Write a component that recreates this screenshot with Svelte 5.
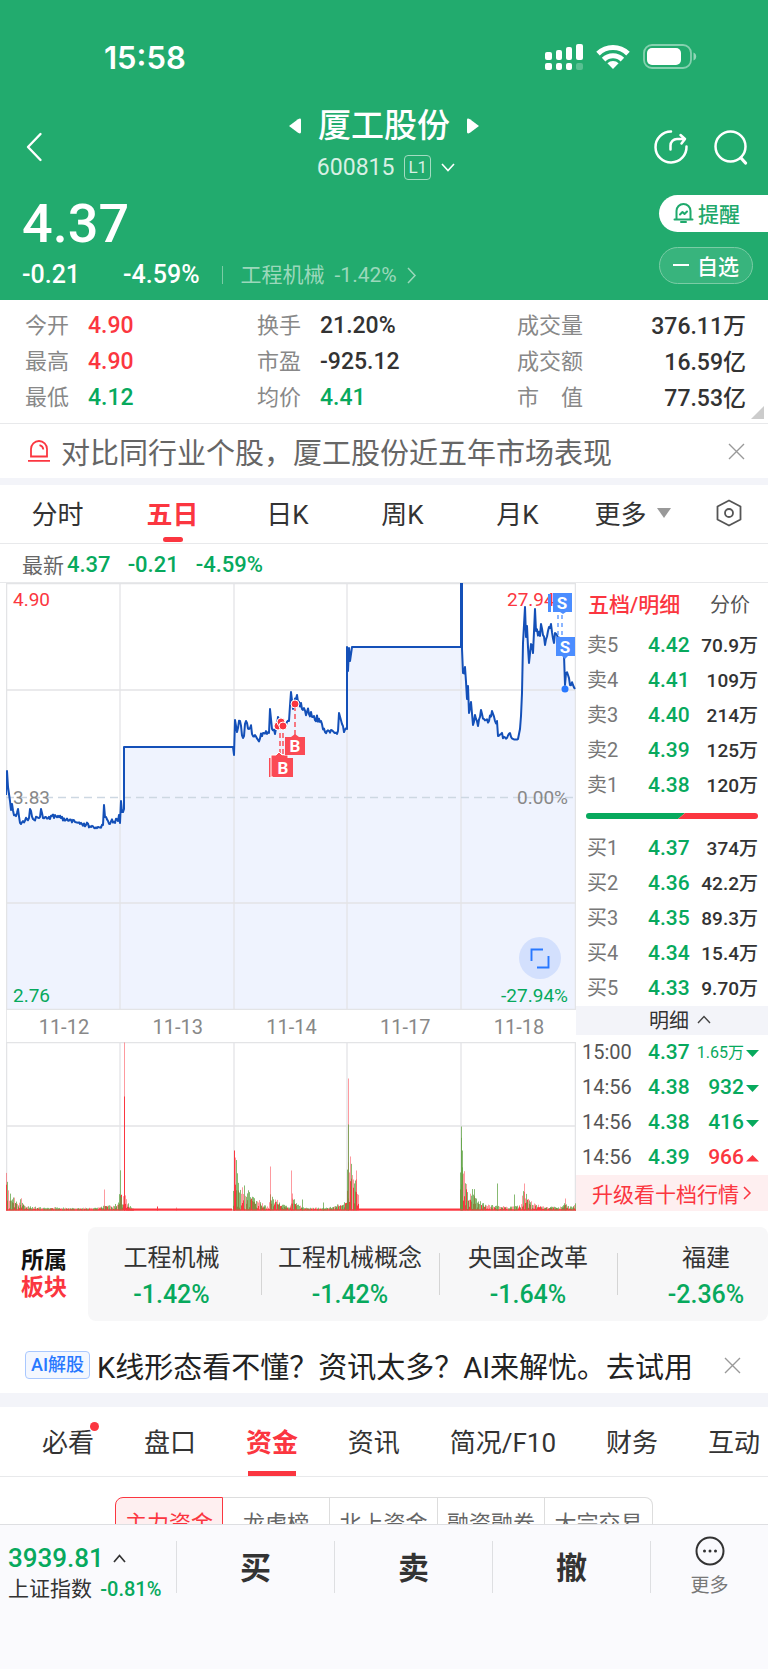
<script>
	const stats = [
		[
			{ label: '今开', value: '4.90', tone: 'up' },
			{ label: '最高', value: '4.90', tone: 'up' },
			{ label: '最低', value: '4.12', tone: 'down' }
		],
		[
			{ label: '换手', value: '21.20%' },
			{ label: '市盈', value: '-925.12' },
			{ label: '均价', value: '4.41', tone: 'down' }
		],
		[
			{ label: '成交量', value: '376.11万' },
			{ label: '成交额', value: '16.59亿' },
			{ label: '市　值', value: '77.53亿' }
		]
	];

	const periods = ['分时', '五日', '日K', '周K', '月K'];
	let period = $state('五日');

	const sells = [
		['卖5', '4.42', '70.9万'],
		['卖4', '4.41', '109万'],
		['卖3', '4.40', '214万'],
		['卖2', '4.39', '125万'],
		['卖1', '4.38', '120万']
	];
	const buys = [
		['买1', '4.37', '374万'],
		['买2', '4.36', '42.2万'],
		['买3', '4.35', '89.3万'],
		['买4', '4.34', '15.4万'],
		['买5', '4.33', '9.70万']
	];
	const trades = [
		{ time: '15:00', price: '4.37', qty: '1.65万', dir: 'down' },
		{ time: '14:56', price: '4.38', qty: '932', dir: 'down' },
		{ time: '14:56', price: '4.38', qty: '416', dir: 'down' },
		{ time: '14:56', price: '4.39', qty: '966', dir: 'up' }
	];

	const sectors = [
		{ name: '工程机械', pct: '-1.42%' },
		{ name: '工程机械概念', pct: '-1.42%' },
		{ name: '央国企改革', pct: '-1.64%' },
		{ name: '福建', pct: '-2.36%' }
	];

	const sections = ['必看', '盘口', '资金', '资讯', '简况/F10', '财务', '互动'];
	let section = $state('资金');

	const funds = ['主力资金', '龙虎榜', '北上资金', '融资融券', '大宗交易'];
	let fund = $state('主力资金');

	const dates = ['11-12', '11-13', '11-14', '11-17', '11-18'];
	const gridX = [114, 228, 341, 455];

	// repeatable noise in 0..1
	function noise(n) {
		const s = Math.sin(n * 127.1 + 11.7) * 43758.5453;
		return s - Math.floor(s);
	}

	// [x, y, jitter up to the next point]
	const price = [
		[0, 212, 0], [1, 188, 0], [2, 204, 0], [4, 218, 2], [5, 227, 2], [6, 221, 4], [9, 232, 4], [12, 226, 4], [15, 241, 3],
		[23, 235, 1], [24, 226, 2], [27, 236, 2], [34, 234, 1], [35, 226, 2], [37, 235, 3], [44, 236, 3], [49, 232, 2],
		[60, 237, 2], [80, 242, 3], [92, 244, 2], [97, 242, 0], [98, 222, 0], [99, 234, 2], [102, 238, 3], [109, 240, 4],
		[113, 232, 2], [114, 240, 0], [115, 218, 0], [116, 229, 2], [118, 226, 0], [118, 164, 0], [227, 164, 0], [228, 172, 0],
		[229, 137, 0], [231, 149, 6], [234, 138, 4], [237, 155, 4], [240, 138, 4], [243, 146, 6], [249, 152, 5], [252, 157, 3],
		[257, 150, 2], [263, 150, 0], [264, 126, 0], [266, 146, 3], [269, 151, 3], [272, 134, 3], [276, 143, 3], [283, 138, 2],
		[285, 109, 0], [287, 126, 4], [291, 112, 5], [296, 126, 5], [303, 131, 3], [308, 133, 4], [315, 138, 3], [319, 149, 3],
		[325, 147, 3], [331, 151, 2], [332, 148, 0], [333, 130, 0], [336, 141, 3], [338, 149, 2], [341, 146, 0], [341, 64, 0],
		[342, 88, 0], [343, 65, 0], [344, 78, 0], [346, 64, 0], [455, 64, 0], [455, 0, 0], [456, 0, 0], [456, 66, 0],
		[457, 90, 5], [459, 84, 4], [461, 116, 3], [462, 103, 0], [463, 130, 3], [465, 119, 0], [467, 142, 2], [469, 132, 3],
		[472, 143, 2], [475, 127, 3], [478, 136, 3], [483, 138, 4], [486, 128, 3], [489, 138, 3], [491, 138, 0], [492, 153, 2],
		[495, 151, 3], [501, 155, 1], [504, 150, 2], [507, 156, 1], [512, 156, 0], [514, 146, 3], [515, 133, 2], [516, 110, 2],
		[517, 60, 0], [519, 24, 0], [520, 54, 3], [521, 43, 3], [523, 80, 0], [525, 61, 5], [527, 70, 2], [529, 26, 0],
		[530, 48, 4], [534, 53, 0], [535, 41, 4], [539, 62, 4], [542, 48, 3], [545, 41, 3], [548, 60, 0], [549, 50, 3],
		[556, 62, 4], [558, 72, 0], [559, 102, 0], [560, 90, 3], [562, 92, 3], [564, 102, 3], [567, 102, 2], [569, 106, 0]
	];

	function pricePath() {
		const out = [];
		for (let i = 0; i < price.length; i++) {
			const [x, y, j] = price[i];
			out.push(`${x},${y}`);
			const next = price[i + 1];
			if (!next || j === 0) continue;
			for (let px = x + 1; px < next[0]; px++) {
				const t = (px - x) / (next[0] - x);
				out.push(`${px},${(y + (next[1] - y) * t + (noise(px) - 0.5) * 2 * j).toFixed(1)}`);
			}
		}
		return out.join(' ');
	}
	const line = pricePath();

	// volume envelope: [x, height]
	const volume = [
		[0, 44], [1, 34], [3, 18], [8, 13], [12, 6], [15, 14], [18, 6], [25, 4], [60, 3], [90, 3], [96, 4], [98, 8], [104, 5],
		[112, 8], [114, 42], [116, 10], [118, 20], [121, 10], [126, 3], [128, 2], [226, 2], [228, 66], [231, 44], [234, 24],
		[240, 26], [247, 15], [255, 9], [262, 4], [264, 20], [268, 14], [276, 7], [283, 4], [286, 16], [292, 6], [300, 3],
		[318, 3], [325, 4], [335, 8], [340, 12], [342, 88], [344, 60], [346, 36], [350, 40], [352, 18], [353, 2], [453, 2],
		[455, 84], [457, 44], [460, 40], [462, 18], [467, 26], [471, 12], [478, 7], [490, 5], [505, 4], [514, 6], [518, 26],
		[522, 12], [530, 7], [542, 4], [555, 4], [559, 10], [563, 4], [570, 8]
	];
	const spikes = [
		[98, 21, 'p'], [118, 168, 'p'], [118, 114, 'r'], [151, 4, 'r'], [170, 3, 'p'], [228, 60, 'r'], [264, 44, 'p'],
		[285, 40, 'p'], [286, 17, 'p'], [296, 11, 'g'], [317, 8, 'g'], [342, 132, 'p'], [342, 86, 'g'], [347, 31, 'p'],
		[350, 40, 'p'], [455, 84, 'g'], [456, 60, 'g'], [491, 27, 'g'], [508, 16, 'g'], [518, 27, 'p'], [559, 12, 'p']
	];

	function volumeBars() {
		const bars = [];
		for (let i = 0; i < volume.length - 1; i++) {
			const [x0, h0] = volume[i];
			const [x1, h1] = volume[i + 1];
			for (let x = x0; x < x1; x++) {
				const h = h0 + ((h1 - h0) * (x - x0)) / (x1 - x0);
				if (h <= 2) continue;
				bars.push([x, Math.max(1, h * 0.7 * noise(x + 300)), 'r']);
				bars.push([x, Math.max(2, h * (0.5 + noise(x) * 0.5)), noise(x + 900) > 0.4 ? 'g' : 'p']);
			}
		}
		return bars.concat(spikes);
	}
	const bars = volumeBars();
</script>

<svelte:head>
	<title>厦工股份 600815</title>
</svelte:head>

{#snippet closeIcon()}
	<svg width="17" height="17" viewBox="0 0 17 17" fill="none" stroke="#999" stroke-width="1.4"><path d="M1 1l15 15M16 1L1 16" /></svg>
{/snippet}

{#snippet book(rows)}
	<table class="book">
		<tbody>
			{#each rows as [name, p, qty]}
				<tr><th scope="row">{name}</th><td class="down">{p}</td><td class="qty">{qty}</td></tr>
			{/each}
		</tbody>
	</table>
{/snippet}

<div class="page">
	<header>
		<div class="status">
			<span class="clock">15:58</span>
			<div class="status-icons">
				<svg width="38" height="28" viewBox="0 0 38 28" fill="#fff">
					<rect x="0" y="8" width="7" height="8" rx="2" /><rect x="11" y="6" width="6" height="10" rx="2" />
					<rect x="21" y="3" width="6" height="13" rx="2" /><rect x="31" y="0" width="7" height="16" rx="2" />
					<rect x="0" y="19" width="7" height="7" rx="2" /><rect x="11" y="19" width="6" height="7" rx="2" />
					<rect x="21" y="19" width="6" height="7" rx="2" /><rect x="31" y="19" width="7" height="7" rx="2" opacity="0.25" />
				</svg>
				<svg width="34" height="25" viewBox="0 0 34 25" fill="none" stroke="#fff" stroke-width="5">
					<path d="M2 9.6a21.4 21.4 0 0 1 30 0" /><path d="M7.6 15.6a13.4 13.4 0 0 1 18.8 0" />
					<path d="M17 25l-5.6-5.7a8 8 0 0 1 11.2 0z" fill="#fff" stroke="none" />
				</svg>
				<svg width="54" height="25" viewBox="0 0 54 25">
					<rect x="1" y="1" width="47" height="23" rx="8" fill="none" stroke="#fff" stroke-opacity="0.45" stroke-width="1.8" />
					<rect x="4" y="4" width="34" height="17" rx="5" fill="#fff" />
					<path d="M50.5 8.500c3.6 1.2 3.6 6.8 0 8z" fill="#fff" opacity="0.5" />
				</svg>
			</div>
		</div>

		<nav class="title-bar" aria-label="个股">
			<button class="back" aria-label="返回">
				<svg width="18" height="30" viewBox="0 0 18 30" fill="none" stroke="#fff" stroke-width="2.4" stroke-linecap="round" stroke-linejoin="round"><path d="M15.5 2L3 15l12.5 13" /></svg>
			</button>
			<div class="title">
				<div class="name-row">
					<button aria-label="上一只"><svg width="12" height="16" viewBox="0 0 12 16" fill="#fff"><path d="M0 8L9 1.2Q12 -.5 12 2v12q0 2.5-3 .8z" /></svg></button>
					<h1>厦工股份</h1>
					<button aria-label="下一只"><svg width="12" height="16" viewBox="0 0 12 16" fill="#fff"><path d="M12 8L3 1.2Q0 -.5 0 2v12q0 2.5 3 .8z" /></svg></button>
				</div>
				<div class="code-row">
					<span>600815</span><span class="level">L1</span>
					<svg width="14" height="9" viewBox="0 0 14 9" fill="none" stroke="#fff" stroke-width="1.6"><path d="M1 1l6 6.5L13 1" /></svg>
				</div>
			</div>
			<div class="actions">
				<button aria-label="分享">
					<svg width="36" height="36" viewBox="0 0 36 36" fill="none" stroke="#fff" stroke-width="2.5" stroke-linecap="round" stroke-linejoin="round">
						<path d="M18 2.500A15.5 15.5 0 1 0 33.5 17.5" /><path d="M17.5 20.5v-4a6.5 6.5 0 0 1 6.5-6.500h7M27.5 6l4.500 4-3.500 4.500" />
					</svg>
				</button>
				<button aria-label="搜索">
					<svg width="36" height="36" viewBox="0 0 36 36" fill="none" stroke="#fff" stroke-width="2.5" stroke-linecap="round"><circle cx="17.5" cy="17.5" r="15" /><path d="M28 29l4.5 5" stroke-width="3.2" /></svg>
				</button>
			</div>
		</nav>

		<div class="quote">
			<div>
				<div class="last">4.37</div>
				<div class="change">
					<span>-0.21</span><span>-4.59%</span>
					<a href="#sector">工程机械 <b>-1.42%</b>
						<svg width="10" height="17" viewBox="0 0 10 17" fill="none" stroke="currentColor" stroke-width="1.5"><path d="M1 1l7 7.5L1 16" /></svg>
					</a>
				</div>
			</div>
			<div class="pills">
				<button class="pill alert">
					<svg width="21" height="22" viewBox="0 0 21 22" fill="none" stroke="#1fa96c" stroke-width="2" stroke-linejoin="round" stroke-linecap="round">
						<path d="M1.5 17.500h18M3.5 17V9a7 7 0 0 1 14 0v8M8 20h5M7 12.500l2.5-2.500 2 2L14 9.500" />
					</svg>提醒
				</button>
				<button class="pill watch"><i></i>自选</button>
			</div>
		</div>
	</header>

	<section class="stats">
		{#each stats as col}
			<dl>
				{#each col as s}
					<div><dt>{s.label}</dt><dd class={s.tone}>{s.value}</dd></div>
				{/each}
			</dl>
		{/each}
	</section>

	<div class="notice">
		<svg width="22" height="22" viewBox="0 0 22 22" fill="none" stroke="#fb3640" stroke-width="1.8">
			<path d="M3 16.500V9a8 8 0 0 1 16 0v7.500zM0 20.800h22M11.500 5.200q3.5.8 3.8 4.300" />
		</svg>
		<a href="#compare">对比同行业个股，厦工股份近五年市场表现</a>
		<button aria-label="关闭">{@render closeIcon()}</button>
	</div>

	<nav class="periods" aria-label="周期">
		{#each periods as p}
			<button class:active={period === p} onclick={() => (period = p)}>{p}</button>
		{/each}
		<button>更多<svg width="14" height="10" viewBox="0 0 14 10" fill="#999"><path d="M0 0h14L7 10z" /></svg></button>
		<button aria-label="设置">
			<svg width="28" height="28" viewBox="0 0 28 28" fill="none" stroke="#555" stroke-width="1.8" stroke-linejoin="round"><path d="M14 1.500l11.500 6v13L14 26.500l-11.500-6v-13z" /><circle cx="14" cy="14" r="4" /></svg>
		</button>
	</nav>

	<div class="latest"><span>最新</span><b>4.37</b><b>-0.21</b><b>-4.59%</b></div>

	<main class="market">
		<div class="charts">
			<svg class="price" viewBox="0 0 570 427" role="img" aria-label="五日走势">
				<polygon points="0,427 {line} 570,427" fill="#eff3fe" />
				<g stroke="#e3e4e6" stroke-width="1.3">
					{#each gridX as x}<path d="M{x} 0v427" />{/each}
					<path d="M0 107h570M0 320h570M0 .5h570M0 426.500h570M.6 0v427M569.400 0v427" />
				</g>
				<path d="M0 214.500h570" stroke="#cdd8e2" stroke-width="1.3" stroke-dasharray="8 5" />
				<polyline points={line} fill="none" stroke="#1450b8" stroke-width="2" stroke-linejoin="round" />
				<g class="axis">
					<text x="7" y="23" fill="#fb3640">4.90</text>
					<text x="7" y="221" fill="#888">3.83</text>
					<text x="7" y="419" fill="#07a95d">2.76</text>
					<text x="501" y="23" fill="#fb3640">27.94</text>
					<text x="562" y="221" fill="#888" text-anchor="end">0.00%</text>
					<text x="562" y="419" fill="#07a95d" text-anchor="end">-27.94%</text>
				</g>
				<g stroke="#fb3640" stroke-width="1.3" stroke-dasharray="5 3"><path d="M274 142v32M277 142v32M289 123v29" /></g>
				<g fill="#fb3640" stroke="#fff" stroke-width="1">
					<circle cx="272" cy="143" r="4" /><circle cx="275" cy="139" r="4" /><circle cx="277" cy="143" r="4" /><circle cx="289" cy="121" r="4" />
				</g>
				<g class="mark buy">
					<path d="M263 175h20v19h-20z" /><path d="M265 172h5l3-3 3 3h6v22h-17z" stroke="#fff" />
					<path d="M267 175h7l3-3 3 3h7v19h-20z" /><path d="M279 154h6l4-3 4 3h6v18h-20z" />
					<text x="277" y="191">B</text><text x="289" y="169">B</text>
				</g>
				<g stroke="#5b97ff" stroke-width="1.4" stroke-dasharray="4 4"><path d="M552 32v22M556 32v22" /></g>
				<g class="mark sell">
					<path d="M542 11h3v18h-3z" /><path d="M547 10h19v19h-6l-3 2-3-2h-7z" />
					<path d="M550 54h19v19h-7l-3 3-3-3h-6z" />
					<text x="556" y="26">S</text><text x="559" y="70">S</text>
				</g>
				<circle cx="559" cy="106" r="3.5" fill="#2878ff" />
				<g class="zoom">
					<circle cx="534" cy="375" r="21" fill="#d3e0fd" />
					<path d="M525.5 378v-11.500H537M542.5 373v11.500H531" fill="none" stroke="#2878ff" stroke-width="1.9" />
				</g>
			</svg>
			<div class="dates">
				{#each dates as d}<span>{d}</span>{/each}
			</div>
			<svg class="volume" viewBox="0 0 570 169" role="img" aria-label="成交量">
				<g stroke="#e3e4e6" stroke-width="1.3">
					{#each gridX as x}<path d="M{x} 0v169" />{/each}
					<path d="M0 .5h570M0 84h570M.6 0v169M569.400 0v169" />
				</g>
				{#each bars as [x, h, kind]}
					<rect class={kind} {x} y={168.5 - h} width="1" height={h} />
				{/each}
				<path d="M120 167.500h106M353 167.500h101" stroke="#fb3640" stroke-width="2" />
				<path d="M0 168h570" stroke="#fb3640" stroke-opacity="0.6" stroke-width="1.5" />
			</svg>
		</div>

		<aside class="panel">
			<div class="panel-tabs"><button class="active">五档/明细</button><button>分价</button></div>
			{@render book(sells)}
			<div class="ratio">
				<svg width="100%" height="6" viewBox="0 0 172 6" preserveAspectRatio="none"><path d="M0 0h99l-7 6H0z" fill="#07a95d" /><path d="M99 0h73v6H92z" fill="#fb3640" /></svg>
			</div>
			{@render book(buys)}
			<button class="detail-head">明细
				<svg width="14" height="9" viewBox="0 0 14 9" fill="none" stroke="#444" stroke-width="1.4"><path d="M1 8l6-6.500L13 8" /></svg>
			</button>
			<table class="trades">
				<tbody>
					{#each trades as t}
						<tr>
							<td>{t.time}</td>
							<td class="down">{t.price}</td>
							<td class="{t.dir} vol" class:small={t.qty.includes('万')}>{t.qty}<svg width="13" height="7" viewBox="0 0 13 7" fill="currentColor"><path d={t.dir === 'up' ? 'M0 6.5L6.5 0 13 6.5z' : 'M0 0h13L6.5 7z'} /></svg></td>
						</tr>
					{/each}
				</tbody>
			</table>
			<a class="upgrade" href="#upgrade">升级看十档行情
				<svg width="9" height="14" viewBox="0 0 9 14" fill="none" stroke="currentColor" stroke-width="1.5"><path d="M1 1l6 6-6 6" /></svg>
			</a>
		</aside>
	</main>

	<section class="sectors" id="sector">
		<h2>所属<em>板块</em></h2>
		<ul>
			{#each sectors as s}
				<li><span>{s.name}</span><b>{s.pct}</b></li>
			{/each}
		</ul>
	</section>

	<div class="ai">
		<span class="ai-tag">AI解股</span>
		<a href="#ai">K线形态看不懂？资讯太多？AI来解忧。去试用</a>
		<button aria-label="关闭">{@render closeIcon()}</button>
	</div>

	<nav class="sections" aria-label="栏目">
		{#each sections as s}
			<button class:active={section === s} class:dot={s === '必看'} onclick={() => (section = s)}>{s}</button>
		{/each}
	</nav>

	<div class="funds">
		<div class="segment">
			{#each funds as f}
				<button class:active={fund === f} onclick={() => (fund = f)}>{f}</button>
			{/each}
		</div>
	</div>

	<footer>
		<a class="index" href="#index">
			<span class="points">3939.81
				<svg width="13" height="9" viewBox="0 0 13 9" fill="none" stroke="#333" stroke-width="1.7"><path d="M1 8l5.5-6.500L12 8" /></svg>
			</span>
			<span class="index-name">上证指数 <b>-0.81%</b></span>
		</a>
		<button class="trade">买</button>
		<button class="trade">卖</button>
		<button class="trade">撤</button>
		<button class="more">
			<svg width="30" height="30" viewBox="0 0 30 30"><circle cx="15" cy="15" r="13.5" fill="none" stroke="#333" stroke-width="2" /><g fill="#333"><circle cx="9.5" cy="15" r="1.5" /><circle cx="15" cy="15" r="1.5" /><circle cx="20.5" cy="15" r="1.5" /></g></svg>
			更多
		</button>
	</footer>
</div>

<style>
	:global(body) { margin: 0; background: #fafafd; }
	.page {
		--up: #fb3640; --down: #07a95d; --line: #e8e9eb; --band: #f3f4f9;
		font-family: Roboto, "Noto Sans CJK SC", sans-serif;
		color: #333; background: #fff; overflow: hidden;
	}
	button { font: inherit; color: inherit; background: none; border: 0; padding: 0; cursor: pointer; white-space: nowrap; }
	a { color: inherit; text-decoration: none; white-space: nowrap; }
	b { font-weight: 500; }
	svg { display: block; flex: none; }
	.up { color: var(--up); }
	.down { color: var(--down); }

	header { background: #22ab6e; color: #fff; }
	.status { height: 62px; padding: 44px 71px 0 104px; display: flex; justify-content: space-between; align-items: flex-start; }
	.clock { font: 600 31px/28px Inter, sans-serif; }
	.status-icons { display: flex; gap: 13px; }
	.title-bar { height: 82px; display: grid; grid-template-columns: 1fr auto 1fr; align-items: center; }
	.back { justify-self: start; padding-left: 25px; }
	.name-row { height: 40px; display: flex; align-items: center; gap: 17px; }
	h1 { margin: 0; font-size: 33px; line-height: 40px; font-weight: 500; }
	.code-row { height: 42px; display: flex; align-items: center; justify-content: center; gap: 10px; padding-left: 4px; font-size: 23px; color: #d8f0e4; }
	.level { font-size: 17px; line-height: 23px; padding: 0 3px; border: 1px solid #a3dcc1; border-radius: 4px; }
	.actions { justify-self: end; display: flex; gap: 24px; padding-right: 19px; }
	.quote { height: 112px; display: flex; justify-content: space-between; }
	.last { padding-left: 22px; font-size: 54px; line-height: 72px; font-weight: 500; }
	.change { display: flex; align-items: center; padding-left: 22px; font-size: 25px; line-height: 30px; font-weight: 500; }
	.change span + span { margin-left: 43px; }
	.change a { display: flex; align-items: center; gap: 10px; margin-left: 22px; font-size: 21px; font-weight: 400; color: #9bd8bb; position: relative; padding-left: 19px; }
	.change a::before { content: ''; position: absolute; left: 0; top: 6px; width: 1px; height: 18px; background: #7acca5; }
	.change a b { font-weight: 400; }
	.pills { display: flex; flex-direction: column; align-items: flex-end; gap: 15px; padding-top: 7px; }
	.pill { box-sizing: border-box; height: 37px; display: flex; align-items: center; padding-bottom: 2px; font-size: 21px; font-weight: 500; }
	.alert { width: 109px; gap: 4px; padding-left: 14px; border-radius: 19px 0 0 19px; background: #fff; color: #1fa96c; }
	.watch { width: 94px; margin-right: 15px; justify-content: center; gap: 8px; border-radius: 19px; border: 1px solid #7acca5; background: #38b47d; }
	.watch i { width: 16px; height: 2px; background: #fff; }

	.stats { position: relative; display: grid; grid-template-columns: 232fr 260fr 229fr; padding: 6px 22px 9px 25px; border-bottom: 1px solid var(--line); }
	.stats::after { content: ''; position: absolute; right: 4px; bottom: 4px; border-left: 13px solid transparent; border-bottom: 13px solid #ccc; }
	dl { margin: 0; }
	dl div { display: flex; height: 36px; align-items: center; gap: 19px; }
	dl:last-child div { justify-content: space-between; }
	dt { padding-bottom: 2px; font-size: 22px; color: #888; }
	dd { margin: 0; padding-top: 2px; font-size: 23px; font-weight: 500; }
	dl:last-child dd { padding-top: 0; }

	.notice, .ai { display: flex; align-items: center; font-size: 29px; }
	.notice { height: 54px; padding: 0 23px 0 28px; border-bottom: 7px solid var(--band); color: #666; }
	.notice a { flex: 1; margin-left: 11px; }

	.periods { display: grid; grid-template-columns: repeat(6, 115fr) 78fr; height: 58px; border-bottom: 1px solid var(--line); font-size: 26px; }
	.periods button { position: relative; display: flex; align-items: center; justify-content: center; gap: 10px; padding-bottom: 3px; }
	.periods .active { color: var(--up); font-weight: 700; }
	.periods .active::after { content: ''; position: absolute; bottom: 1px; left: 50%; margin-left: -10px; width: 20px; height: 5px; border-radius: 3px; background: var(--up); }
	.latest { display: flex; align-items: center; height: 39px; padding-left: 22px; font-size: 21px; color: #666; }
	.latest b { margin-right: 17px; padding-top: 2px; font-size: 22px; color: var(--down); }
	.latest span { margin-right: 3px; }

	.market { display: flex; align-items: flex-start; border-top: 1px solid var(--line); margin-top: -1px; }
	.charts { flex: 1; margin-left: 6px; }
	.charts > svg { width: 100%; height: auto; }
	.axis { font-size: 19px; }
	.mark { stroke-width: 1; }
	.mark text { font-size: 17px; font-weight: 700; fill: #fff; text-anchor: middle; }
	.buy { fill: #fb4a55; }
	.sell { fill: #4b8dff; }
	.zoom { cursor: pointer; }
	.dates { display: grid; grid-template-columns: repeat(5, 1fr); height: 32px; line-height: 35px; text-align: center; font-size: 20px; color: #888; border-left: 1px solid var(--line); box-sizing: border-box; }
	.r { fill: #fb3640; }
	.p { fill: #fb3640; fill-opacity: 0.5; }
	.g { fill: #5fa343; fill-opacity: 0.75; }

	.panel { width: 192px; }
	.panel-tabs { display: flex; justify-content: space-between; height: 45px; box-sizing: border-box; padding: 0 18px 5px 12px; font-size: 20px; color: #555; }
	.panel-tabs .active { color: var(--up); font-weight: 500; font-size: 21px; }
	table { border-collapse: collapse; width: 100%; table-layout: fixed; }
	th, td { padding: 0; height: 35px; line-height: 35px; font-size: 21px; font-weight: 500; text-align: left; white-space: nowrap; }
	.book th { width: 72px; padding-left: 11px; box-sizing: border-box; font-size: 20px; font-weight: 400; color: #777; }
	.book td.down { width: 42px; }
	.book .qty { padding-right: 10px; text-align: right; font-size: 19px; }
	.ratio { padding: 10px 10px 12px; }
	.ratio svg { border-radius: 3px; }
	.detail-head { display: flex; align-items: center; justify-content: center; gap: 8px; width: 100%; height: 29px; padding: 0 0 2px 16px; background: var(--band); font-size: 20px; }
	.trades td:first-child { width: 72px; padding-left: 6px; box-sizing: border-box; font-size: 20px; font-weight: 400; color: #555; }
	.trades td:nth-child(2) { width: 42px; }
	.trades .vol { text-align: right; padding-right: 9px; }
	.trades .small { font-size: 16px; font-weight: 400; }
	.vol svg { display: inline-block; vertical-align: middle; margin-left: 2px; }
	.upgrade { display: flex; align-items: center; justify-content: center; gap: 4px; height: 36px; background: #feeff0; color: var(--up); font-size: 21px; }

	.sectors { display: flex; align-items: center; padding-top: 16px; }
	h2 { margin: 0; width: 67px; padding-left: 21px; font-size: 23px; line-height: 27px; font-weight: 700; color: #111; }
	h2 em { display: block; font-style: normal; color: var(--up); }
	ul { flex: 1; display: flex; height: 94px; margin: 0; padding: 0; list-style: none; background: #f7f7f8; border-radius: 8px; overflow: hidden; }
	li { flex: 0 0 178px; box-sizing: border-box; display: flex; flex-direction: column; align-items: center; justify-content: center; gap: 3px; padding-top: 5px; line-height: 33px; font-size: 24px; position: relative; white-space: nowrap; }
	li:first-child { flex-basis: 173px; padding-right: 6px; }
	li + li::before { content: ''; position: absolute; left: 0; top: 26px; height: 42px; width: 1px; background: #d5d5d5; }
	li b { font-size: 25px; color: var(--down); }

	.ai { height: 56px; padding: 16px 27px 0 25px; border-bottom: 14px solid var(--band); }
	.ai a { flex: 1; margin-left: 7px; color: #222; }
	.ai-tag { font-size: 18px; line-height: 26px; padding: 0 5px; border: 1px solid #a9c8ff; border-radius: 4px; background: #f3f7ff; color: #2878ff; font-weight: 500; }

	.sections { display: flex; justify-content: space-between; height: 69px; padding: 0 8px 0 42px; border-bottom: 1px solid var(--line); font-size: 26px; }
	.sections button { position: relative; height: 69px; padding-bottom: 3px; }
	.sections .active { color: var(--up); font-weight: 700; }
	.sections .active::after { content: ''; position: absolute; left: 2px; right: 2px; bottom: 0; height: 5px; background: var(--up); }
	.dot::after { content: ''; position: absolute; right: -5px; top: 15px; width: 9px; height: 9px; border-radius: 50%; background: var(--up); }

	.funds { height: 47px; overflow: hidden; }
	.segment { display: grid; grid-template-columns: repeat(5, 1fr); width: 70%; margin: 20px auto 0; height: 54px; }
	.segment button { padding-bottom: 6px; border: 1px solid #ddd; border-left: 0; font-size: 22px; color: #666; }
	.segment button:first-child { border-left: 1px solid; border-radius: 8px 0 0 8px; }
	.segment button:last-child { border-radius: 0 8px 8px 0; }
	.segment .active { border-color: var(--up); background: #feeff0; color: var(--up); }

	footer { display: grid; grid-template-columns: 176fr 158fr 158fr 158fr 118fr; height: 144px; align-items: start; border-top: 1px solid #dedfe2; background: #fafafd; }
	.index { padding: 17px 0 0 8px; }
	.points { display: flex; align-items: center; gap: 9px; font-size: 26px; line-height: 32px; font-weight: 500; color: var(--down); }
	.index-name { display: block; font-size: 21px; line-height: 30px; }
	.index-name b { margin-left: 3px; color: var(--down); font-size: 20px; }
	.trade, .more { margin-top: 16px; height: 52px; border-left: 1px solid #dedfe2; }
	.trade { padding-bottom: 4px; font-size: 31px; font-weight: 700; }
	.more { display: flex; flex-direction: column; align-items: center; gap: 6px; font-size: 19px; line-height: 28px; color: #777; }
	.more svg { margin-top: -5px; }
</style>
